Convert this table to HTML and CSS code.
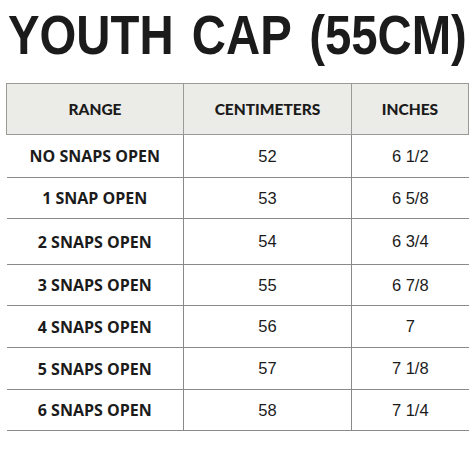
FILE: index.html
```html
<!DOCTYPE html>
<html lang="en">
<head>
<meta charset="UTF-8">
<title>Youth Cap Size Chart</title>
<link rel="stylesheet" href="styles.css">
</head>
<body>
<div class="chart">
    <h1 class="title">YOUTH CAP (55CM)</h1>

    <table class="size-table">
        <thead>
            <tr>
                <th>RANGE</th>
                <th>CENTIMETERS</th>
                <th>INCHES</th>
            </tr>
        </thead>
        <tbody>
            <tr><td class="range">NO SNAPS OPEN</td><td>52</td><td>6 1/2</td></tr>
            <tr><td class="range">1 SNAP OPEN</td><td>53</td><td>6 5/8</td></tr>
            <tr><td class="range">2 SNAPS OPEN</td><td>54</td><td>6 3/4</td></tr>
            <tr><td class="range">3 SNAPS OPEN</td><td>55</td><td>6 7/8</td></tr>
            <tr><td class="range">4 SNAPS OPEN</td><td>56</td><td>7</td></tr>
            <tr><td class="range">5 SNAPS OPEN</td><td>57</td><td>7 1/8</td></tr>
            <tr><td class="range">6 SNAPS OPEN</td><td>58</td><td>7 1/4</td></tr>
        </tbody>
    </table>
</div>
</body>
</html>
```

FILE: styles.css
```css
body, html {
    margin: 0;
    padding: 0;
    background: #fff;
    color: #1b1b1b;
    font-family: "Liberation Sans", Arial, sans-serif;
}
.chart {
    padding: 15px 6px 0 6px;
}
.title {
    margin: 0 0 28px 2px;
    font-size: 55px;
    line-height: 40px;
    font-weight: bold;
    word-spacing: 6px;
    white-space: nowrap;
    transform: scaleX(0.86); /* squeeze to the condensed look of the original */
    transform-origin: left center;
}
.size-table {
    width: 463px;
    border-collapse: collapse;
    table-layout: fixed;
}
.size-table th {
    height: 50px;
    padding: 0;
    background-color: #ebebe7;
    border: 1px solid #9a9a96;
    font-family: Lato, sans-serif;
    font-size: 15.5px;
    font-weight: 900;
}
.size-table th:nth-child(1) { width: 176px; }
.size-table th:nth-child(2) { width: 167px; }
.size-table td {
    height: 40px;
    padding: 0;
    text-align: center;
    font-size: 16.5px;
    border-bottom: 1px solid #8a8a8a;
    border-left: 1px solid #8a8a8a;
}
.size-table td:first-child {
    border-left: none;
}
.size-table td.range {
    font-family: "Open Sans", sans-serif;
    font-weight: 700;
    font-size: 16px;
}
/* rows in the original are not all the same height */
.size-table tbody tr:nth-child(1) td { height: 42px; }
.size-table tbody tr:nth-child(3) td { height: 45px; }
.size-table tbody tr:nth-child(5) td,
.size-table tbody tr:nth-child(6) td { height: 41px; }
```
